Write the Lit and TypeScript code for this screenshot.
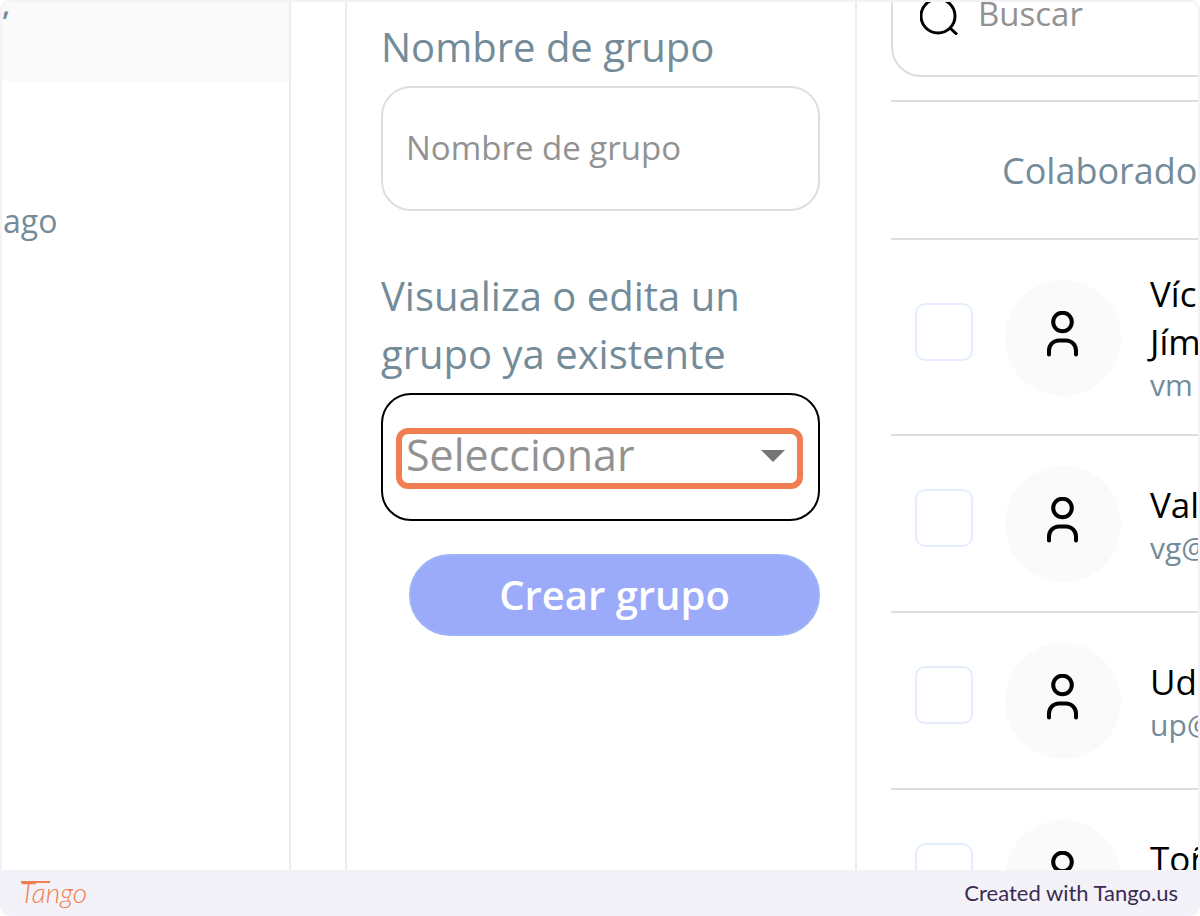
import { LitElement, html, css, svg } from "lit";
import { customElement } from "lit/decorators.js";

interface Person {
  name: string[];
  email: string;
}

const PEOPLE: Person[] = [
  { name: ["Víc", "Jím"], email: "vm" },
  { name: ["Val"], email: "vg@" },
  { name: ["Ud"], email: "up@" },
  { name: ["Toñ"], email: "" },
];

const personIcon = svg`
  <circle cx="16.500" cy="11" r="9.300" />
  <path d="M3 43.500v-4a10 10 0 0 1 10-10h7a10 10 0 0 1 10 10v4" />
`;

@customElement("app-root")
export class AppRoot extends LitElement {
  static styles = css`
    :host {
      display: block;
      font-family: "Open Sans", "Noto Sans", sans-serif;
      color: #748c99;
      --line: #dedede;
      --slate: #748c99;
      --hint: #929292;
      --frame: #f3f2f8;
    }
    * {
      box-sizing: border-box;
    }
    .frame {
      display: flex;
      flex-direction: column;
      height: 100vh;
      border-radius: 10px;
      background: var(--frame);
      overflow: hidden;
    }
    .shot {
      flex: 1;
      min-height: 0;
      margin: 2px 2px 0;
      border-radius: 8px 8px 0 0;
      background: #fff;
      overflow: hidden;
      display: grid;
      grid-template-columns: minmax(0, 289fr) 54px minmax(0, 512fr) minmax(0, 341fr);
      grid-template-rows: minmax(0, 1fr);
    }
    .side {
      border-right: 2px solid #ededf0;
      overflow: hidden;
    }
    .selected {
      height: 79px;
      background: #fafafa;
      font-size: 30px;
      font-weight: 600;
      line-height: 4px;
    }
    .time {
      margin: 120px 1px 0;
      font-size: 32px;
      line-height: 40px;
    }
    .form {
      grid-column: 3;
      border: solid #ededf0;
      border-width: 0 2px;
      padding: 16px 35px 16px 34px;
      display: flex;
      flex-direction: column;
    }
    .label {
      font-size: 40px;
      line-height: 58px;
      margin-bottom: 10px;
    }
    .field {
      width: 100%;
      height: 125px;
      border: 2px solid var(--line);
      border-radius: 30px;
      padding: 0 23px 3px;
      background: #fff;
      font: inherit;
      font-size: 33px;
      color: var(--hint);
      outline: none;
    }
    .field::placeholder {
      color: var(--hint);
      opacity: 1;
    }
    .name {
      margin-bottom: 56px;
    }
    .picker {
      position: relative;
    }
    .select {
      display: block;
      height: 128px;
      border-color: #000;
      appearance: none;
      font-size: 43px;
      padding-bottom: 6px;
    }
    .arrow {
      position: absolute;
      right: 35px;
      top: 57px;
      width: 24px;
      height: 12px;
      fill: #757575;
      pointer-events: none;
    }
    .highlight {
      position: absolute;
      inset: 35px 17px 32px 15px;
      border: 6px solid #f07e51;
      border-radius: 12px;
      pointer-events: none;
    }
    .create {
      margin: 33px 0 0 28px;
      height: 82px;
      border: 2px solid #9db4f7;
      border-radius: 41px;
      background: #9babf9;
      color: #fff;
      font: inherit;
      font-size: 40px;
      font-weight: 600;
      padding: 0 0 2px;
    }
    .people {
      margin: -52px 0 0 34px;
      overflow: visible;
    }
    .search {
      display: flex;
      align-items: center;
      width: 480px;
      height: 127px;
      border: 2px solid var(--line);
      border-radius: 30px;
      padding-left: 27px;
      gap: 20px;
    }
    .lens {
      flex: none;
      width: 38px;
      height: 42px;
      fill: none;
      stroke: #000;
      stroke-width: 3;
    }
    .query {
      border: 0;
      padding: 0;
      outline: none;
      background: none;
      font: inherit;
      font-size: 33px;
      color: var(--hint);
      min-width: 0;
    }
    .query::placeholder {
      color: var(--hint);
      opacity: 1;
    }
    .table {
      width: 480px;
      margin-top: 23px;
      border-collapse: separate;
      border-spacing: 0;
      border-top: 2px solid var(--line);
    }
    .table th {
      height: 138px;
      padding: 0;
      border-bottom: 2px solid var(--line);
      text-align: left;
      font-size: 36px;
      font-weight: 400;
    }
    .table td {
      padding: 30px 0 29px;
      border-bottom: 2px solid var(--line);
      vertical-align: middle;
    }
    .pick {
      width: 111px;
    }
    .box {
      display: block;
      appearance: none;
      width: 58px;
      height: 58px;
      margin: 0 0 12px 24px;
      border: 2px solid #e5eeff;
      border-radius: 10px;
      background: #fff;
    }
    .person {
      display: flex;
      align-items: center;
      gap: 29px;
      margin-left: 3px;
      white-space: nowrap;
    }
    .avatar {
      flex: none;
      display: grid;
      place-items: center;
      width: 116px;
      height: 116px;
      padding-bottom: 8px;
      border-radius: 50%;
      background: #fafafa;
    }
    .glyph {
      width: 34px;
      height: 46px;
      fill: none;
      stroke: #000;
      stroke-width: 4;
      stroke-linecap: round;
    }
    .who {
      font-size: 35px;
      line-height: 48px;
      color: #000;
      margin-bottom: 2px;
    }
    .who span {
      display: block;
    }
    .who .mail {
      font-size: 30px;
      line-height: 37px;
      color: var(--slate);
    }
    .footer {
      flex: none;
      display: flex;
      align-items: center;
      justify-content: space-between;
      height: 46px;
      padding: 0 22px 2px 20px;
      font-family: Lato, sans-serif;
      font-size: 22px;
      color: #3c2a52;
    }
    .brand {
      position: relative;
      color: #f07e51;
      font-size: 28px;
      font-style: italic;
      font-weight: 300;
      line-height: 32px;
      text-decoration: none;
    }
    .brand::before {
      content: "";
      position: absolute;
      left: 1px;
      top: 5px;
      width: 29px;
      height: 2px;
      background: currentColor;
    }
  `;

  private row(person: Person, i: number) {
    return html`<tr>
      <td class="pick">
        <input class="box" type="checkbox" id="p${i}" aria-label=${person.name.join(" ")} />
      </td>
      <td>
        <label class="person" for="p${i}">
          <span class="avatar">
            <svg class="glyph" viewBox="0 0 34 46" aria-hidden="true">${personIcon}</svg>
          </span>
          <span class="who">
            ${person.name.map((part) => html`<span>${part}</span>`)}
            <span class="mail">${person.email || html`&nbsp;`}</span>
          </span>
        </label>
      </td>
    </tr>`;
  }

  render() {
    return html`
      <div class="frame">
        <main class="shot">
          <aside class="side">
            <div class="selected">,</div>
            <div class="time">ago</div>
          </aside>
          <form class="form">
            <label class="label" for="name">Nombre de grupo</label>
            <input class="field name" id="name" type="text" placeholder="Nombre de grupo" />
            <label class="label" for="group">Visualiza o edita un grupo ya existente</label>
            <div class="picker">
              <select class="field select" id="group">
                <option>Seleccionar</option>
              </select>
              <svg class="arrow" viewBox="0 0 24 12" aria-hidden="true"><path d="M0 0h24L12 12z" /></svg>
              <div class="highlight"></div>
            </div>
            <button class="create" type="button">Crear grupo</button>
          </form>
          <section class="people">
            <label class="search">
              <svg class="lens" viewBox="0 0 38 42" aria-hidden="true">
                <circle cx="18" cy="23" r="17" />
                <path d="M29.500 34.500l7.500 7" />
              </svg>
              <input class="query" type="search" placeholder="Buscar" aria-label="Buscar" />
            </label>
            <table class="table">
              <thead>
                <tr>
                  <th class="pick"></th>
                  <th>Colaborado</th>
                </tr>
              </thead>
              <tbody>
                ${PEOPLE.map((p, i) => this.row(p, i))}
              </tbody>
            </table>
          </section>
        </main>
        <footer class="footer">
          <a class="brand" href="#">Tango</a>
          <span>Created with Tango.us</span>
        </footer>
      </div>
    `;
  }
}
